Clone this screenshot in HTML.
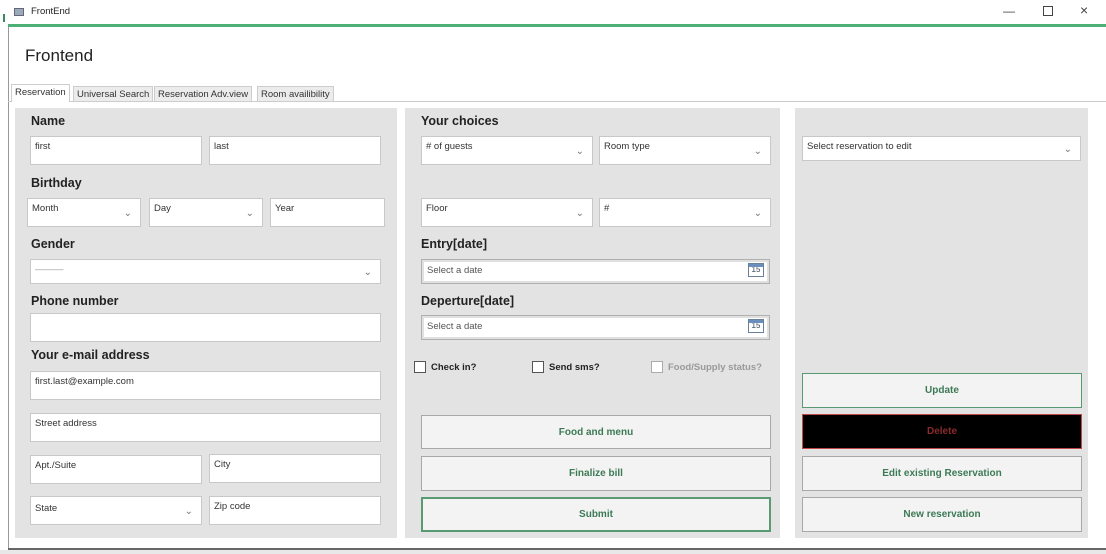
<!DOCTYPE html>
<html><head><style>
*{box-sizing:border-box;margin:0;padding:0}
body{width:1106px;height:554px;background:#fff;position:relative;overflow:hidden;font-family:"Liberation Sans",sans-serif;color:#111}
.a{position:absolute}
.p{position:absolute;background:#e3e3e3}
.lb{position:absolute;font-weight:bold;font-size:12.5px;color:#222}
.tb{position:absolute;background:#fff;border:1px solid #c8c8c8;font-size:9.5px;color:#333;padding:4px 4px}
.dd:after{content:"\2304";position:absolute;right:8px;top:50%;margin-top:-5px;font-size:10px;color:#777}
.btn{position:absolute;background:#f3f3f3;border:1.5px solid #a8a8a8;font-size:10px;font-weight:bold;color:#3c7a55;display:flex;align-items:center;justify-content:center}
.dp{position:absolute;background:#e0e0e0;border:1px solid #b0b0b0;padding:2px}
.dp div{background:#fff;height:100%;font-size:9.5px;color:#555;padding:3px 3px;position:relative}
.cal{position:absolute;right:3px;top:1px;width:16px;height:14px;border:1px solid #6a7f9a;background:#fff;font-size:8px;text-align:center;line-height:11px;color:#345}
.cal:before{content:"";position:absolute;left:0;right:0;top:0;height:3px;background:#6a8fbf}
.cb{position:absolute;font-size:9.5px;font-weight:bold;color:#222;display:flex;align-items:center}
.cb span{display:inline-block;width:12px;height:12px;border:1px solid #555;background:#fff;margin-right:5px}
.tab{position:absolute;top:86px;height:16px;font-size:9.5px;background:#ececec;border:1px solid #cdcdcd;color:#333;padding:2px 3px}
</style></head><body>
<div class="a" style="left:0;top:0;width:1106px;height:24px;background:#fff"></div>
<div class="a" style="left:14px;top:8px;width:10px;height:8px;border:1px solid #667;background:#9ab"></div>
<div class="a" style="left:31px;top:6px;font-size:9.5px;color:#222">FrontEnd</div>
<div class="a" style="left:1003px;top:4px;font-size:12px;color:#444">—</div>
<div class="a" style="left:1043px;top:6px;width:10px;height:10px;border:1px solid #444"></div>
<div class="a" style="left:1080px;top:2px;font-size:14px;color:#444">×</div>
<div class="a" style="left:8px;top:24px;width:1098px;height:3px;background:#4caf76"></div>
<div class="a" style="left:3px;top:14px;width:2px;height:8px;background:#3a8a5a"></div>
<div class="a" style="left:8px;top:27px;width:1px;height:522px;background:#999"></div>
<div class="a" style="left:8px;top:548px;width:1098px;height:2px;background:#666"></div>
<div class="a" style="left:0;top:550px;width:1106px;height:4px;background:#e8e8e8"></div>
<div class="a" style="left:25px;top:46px;font-size:17px;color:#222">Frontend</div>
<div class="a" style="left:8px;top:101px;width:1098px;height:1px;background:#ccc"></div>
<div class="tab" style="left:11px;top:84px;height:18px;background:#fff;border-bottom:none">Reservation</div>
<div class="tab" style="left:73px">Universal Search</div>
<div class="tab" style="left:154px">Reservation Adv.view</div>
<div class="tab" style="left:257px">Room availibility</div>

<div class="p" style="left:15px;top:108px;width:382px;height:430px"></div>
<div class="p" style="left:405px;top:108px;width:375px;height:430px"></div>
<div class="p" style="left:795px;top:108px;width:293px;height:430px"></div>

<div class="lb" style="left:31px;top:114px">Name</div>
<div class="tb" style="left:30px;top:136px;width:172px;height:29px">first</div>
<div class="tb" style="left:209px;top:136px;width:172px;height:29px">last</div>
<div class="lb" style="left:31px;top:176px">Birthday</div>
<div class="tb dd" style="left:27px;top:198px;width:114px;height:29px">Month</div>
<div class="tb dd" style="left:149px;top:198px;width:114px;height:29px">Day</div>
<div class="tb" style="left:270px;top:198px;width:115px;height:29px">Year</div>
<div class="lb" style="left:31px;top:237px">Gender</div>
<div class="tb dd" style="left:30px;top:259px;width:351px;height:25px;color:#999">———</div>
<div class="lb" style="left:31px;top:294px">Phone number</div>
<div class="tb" style="left:30px;top:313px;width:351px;height:29px"></div>
<div class="lb" style="left:31px;top:348px">Your e-mail address</div>
<div class="tb" style="left:30px;top:371px;width:351px;height:29px">first.last@example.com</div>
<div class="tb" style="left:30px;top:413px;width:351px;height:29px">Street address</div>
<div class="tb" style="left:30px;top:455px;width:172px;height:29px">Apt./Suite</div>
<div class="tb" style="left:209px;top:454px;width:172px;height:29px">City</div>
<div class="tb dd" style="left:30px;top:496px;width:172px;height:29px;padding-top:6px">State</div>
<div class="tb" style="left:209px;top:496px;width:172px;height:29px">Zip code</div>

<div class="lb" style="left:421px;top:114px">Your choices</div>
<div class="tb dd" style="left:421px;top:136px;width:172px;height:29px"># of guests</div>
<div class="tb dd" style="left:599px;top:136px;width:172px;height:29px">Room type</div>
<div class="tb dd" style="left:421px;top:198px;width:172px;height:29px">Floor</div>
<div class="tb dd" style="left:599px;top:198px;width:172px;height:29px">#</div>
<div class="lb" style="left:421px;top:237px">Entry[date]</div>
<div class="dp" style="left:421px;top:259px;width:349px;height:25px"><div>Select a date<span class="cal">15</span></div></div>
<div class="lb" style="left:421px;top:294px">Deperture[date]</div>
<div class="dp" style="left:421px;top:315px;width:349px;height:25px"><div>Select a date<span class="cal">15</span></div></div>
<div class="cb" style="left:414px;top:361px"><span></span>Check in?</div>
<div class="cb" style="left:532px;top:361px"><span></span>Send sms?</div>
<div class="cb" style="left:651px;top:361px;color:#999"><span style="border-color:#aaa"></span>Food/Supply status?</div>
<div class="btn" style="left:421px;top:415px;width:350px;height:34px">Food and menu</div>
<div class="btn" style="left:421px;top:456px;width:350px;height:35px">Finalize bill</div>
<div class="btn" style="left:421px;top:497px;width:350px;height:35px;border:2px solid #5a9a72">Submit</div>

<div class="tb dd" style="left:802px;top:136px;width:279px;height:25px">Select reservation to edit</div>
<div class="btn" style="left:802px;top:373px;width:280px;height:35px;border:1.5px solid #5a9a72">Update</div>
<div class="btn" style="left:802px;top:414px;width:280px;height:35px;background:#000;border:1.5px solid #c04848;color:#8a2a2a">Delete</div>
<div class="btn" style="left:802px;top:456px;width:280px;height:35px">Edit existing Reservation</div>
<div class="btn" style="left:802px;top:497px;width:280px;height:35px">New reservation</div>
</body></html>
